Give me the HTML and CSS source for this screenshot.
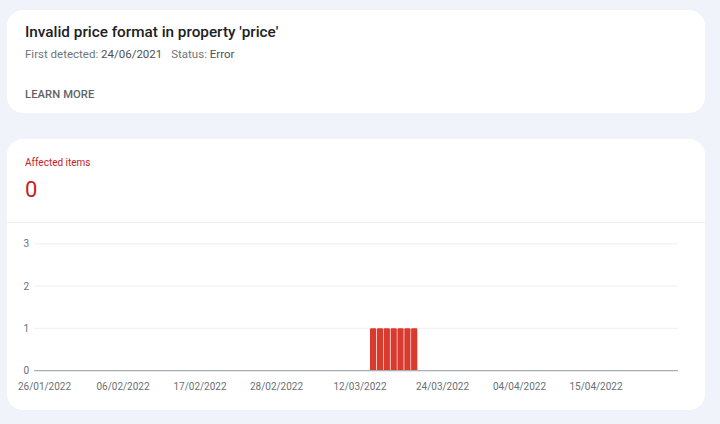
FILE: index.html
```html
<!DOCTYPE html>
<html lang="en">
<head>
    <meta charset="UTF-8">
    <meta name="viewport" content="width=device-width, initial-scale=1.0">
    <title>Invalid price format</title>
    <link rel="stylesheet" href="styles.css">
</head>
<body>
    <div class="card issue">
        <h1>Invalid price format in property 'price'</h1>
        <p class="meta">
            <span>First detected: <b>24/06/2021</b></span>
            <span>Status: <b>Error</b></span>
        </p>
        <a class="learn" href="#">LEARN MORE</a>
    </div>

    <div class="card affected">
        <div class="summary">
            <div class="label">Affected items</div>
            <div class="count">0</div>
        </div>
        <svg class="chart" width="698" height="187" viewBox="0 0 698 187">
            <!-- grid -->
            <g class="grid">
                <line x1="27" x2="671" y1="20.8" y2="20.8"/>
                <line x1="27" x2="671" y1="63" y2="63"/>
                <line x1="27" x2="671" y1="105.3" y2="105.3"/>
            </g>
            <g class="ylabels">
                <text x="22" y="24.3">3</text>
                <text x="22" y="66.5">2</text>
                <text x="22" y="108.8">1</text>
                <text x="22" y="151">0</text>
            </g>
            <!-- bars -->
            <g class="bars">
                <path d="M363 148 V106.3 q0 -1 1 -1 h4.2 q1 0 1 1 V148 Z"/>
                <path d="M369.9 148 V106.3 q0 -1 1 -1 h4.2 q1 0 1 1 V148 Z"/>
                <path d="M376.7 148 V106.3 q0 -1 1 -1 h4.2 q1 0 1 1 V148 Z"/>
                <path d="M383.6 148 V106.3 q0 -1 1 -1 h4.2 q1 0 1 1 V148 Z"/>
                <path d="M390.4 148 V106.3 q0 -1 1 -1 h4.2 q1 0 1 1 V148 Z"/>
                <path d="M397.3 148 V106.3 q0 -1 1 -1 h4.2 q1 0 1 1 V148 Z"/>
                <path d="M404.1 148 V106.3 q0 -1 1 -1 h4.2 q1 0 1 1 V148 Z"/>
            </g>
            <line class="axis" x1="27" x2="671" y1="147.7" y2="147.7"/>
            <g class="xlabels">
                <text x="37.5" y="166.5">26/01/2022</text>
                <text x="116" y="166.5">06/02/2022</text>
                <text x="193" y="166.5">17/02/2022</text>
                <text x="269.5" y="166.5">28/02/2022</text>
                <text x="353" y="166.5">12/03/2022</text>
                <text x="435.5" y="166.5">24/03/2022</text>
                <text x="512.5" y="166.5">04/04/2022</text>
                <text x="589" y="166.5">15/04/2022</text>
            </g>
        </svg>
    </div>
</body>
</html>
```

FILE: styles.css
```css
* {
    margin: 0;
    padding: 0;
    box-sizing: border-box;
}
body {
    font-family: Roboto, 'Liberation Sans', Arial, sans-serif;
    background: #f0f4fa;
    color: #202124;
    padding: 10px 15px 0 7px;
}

.card {
    background: #fff;
    border-radius: 16px;
    width: 698px;
}

.issue {
    height: 103px;
    padding: 12px 18px 0 18px;
}
.issue h1 {
    font-size: 15.3px;
    line-height: 20px;
    font-weight: 500;
    color: #202124;
}
.meta {
    margin-top: 4px;
    font-size: 11.5px;
    line-height: 16px;
    color: #70757a;
    display: flex;
    gap: 9px;
}
.meta b {
    font-weight: 400;
    color: #4d5156;
}
.learn {
    display: inline-block;
    margin-top: 25px;
    font-size: 11.2px;
    line-height: 16px;
    font-weight: 500;
    color: #5f6368;
    text-decoration: none;
    letter-spacing: 0.1px;
}

.affected {
    margin-top: 26px;
    height: 271px;
    overflow: hidden;
}
.summary {
    padding: 17px 18px 18px;
    border-bottom: 1px solid #eeeff1;
}
.label {
    font-size: 10px;
    line-height: 14px;
    color: #c5221f;
}
.count {
    margin-top: 6px;
    font-size: 22px;
    line-height: 28px;
    color: #c5221f;
}

.chart {
    display: block;
}
.grid line {
    stroke: #eeeff1;
    stroke-width: 1;
}
.axis {
    stroke: #a8adb2;
    stroke-width: 1.2;
}
.bars path {
    fill: #d93a2e;
}
.chart text {
    font-family: Roboto, 'Liberation Sans', Arial, sans-serif;
    font-size: 10px;
    fill: #6a6f74;
}
.ylabels text {
    text-anchor: end;
}
.xlabels text {
    text-anchor: middle;
}
```
